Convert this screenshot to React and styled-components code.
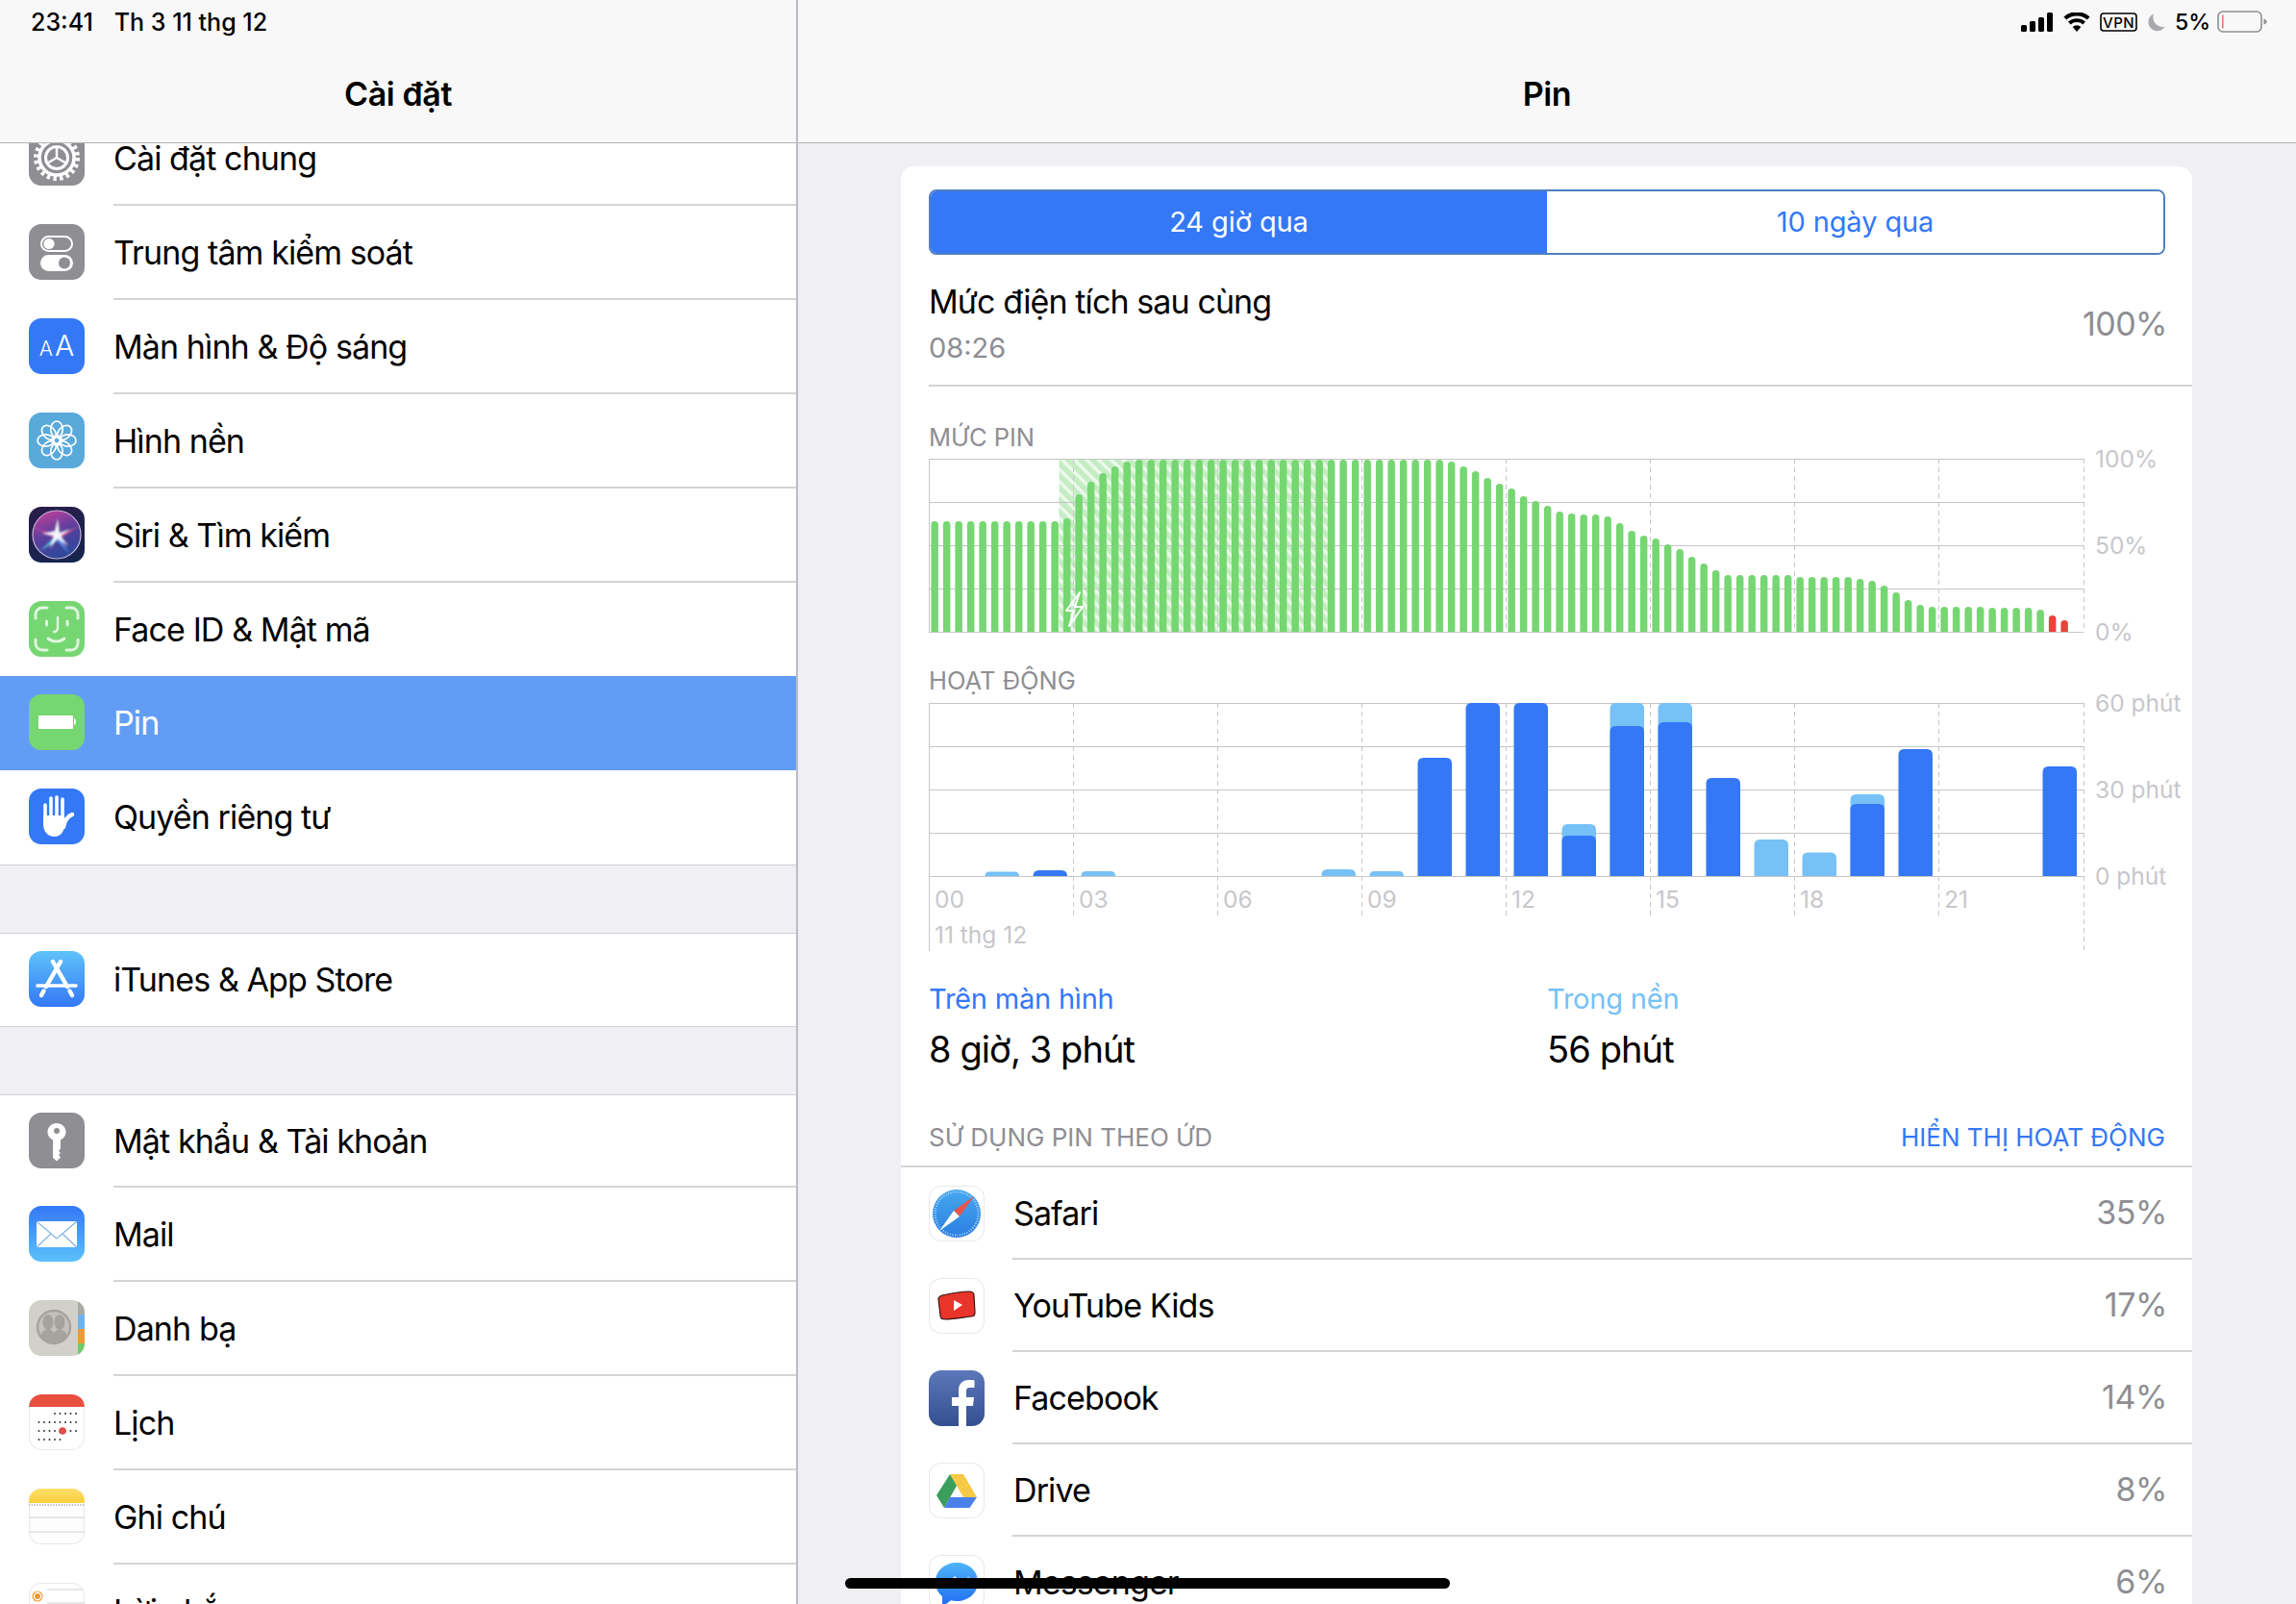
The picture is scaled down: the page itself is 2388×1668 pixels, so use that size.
import styled, { createGlobalStyle } from "styled-components";

const BLUE = "#3478f6";
const LIGHT_BLUE = "#76c1f6";
const GREEN = "#76d672";
const RED = "#e8443a";
const GREY = "#8e8e93";
const FAINT = "#c7c7cc";
const GRID = "#c6c6c8";

const GlobalStyle = createGlobalStyle`
    html, body {
        margin: 0;
        padding: 0;
        background: #efeff4;
    }
    body {
        font-family: Inter, "Liberation Sans", "Noto Sans", sans-serif;
        color: #000;
    }
`;

const Screen = styled.div`
    position: relative;
    display: flex;
    width: 2388px;
    height: 1668px;
    overflow: hidden;
`;

const Sidebar = styled.aside`
    width: 828px;
    flex: none;
    border-right: 2px solid #bcbcc6;
    display: flex;
    flex-direction: column;
    overflow: hidden;
`;

const Detail = styled.main`
    flex: 1;
    display: flex;
    flex-direction: column;
    overflow: hidden;
`;

const Header = styled.header`
    position: relative;
    z-index: 2;
    flex: none;
    height: 148px;
    background: #f8f8f9;
    border-bottom: 1px solid #b2b2b4;
`;

const StatusBar = styled.div`
    height: 46px;
    display: flex;
    align-items: center;
    gap: ${(p) => p.$gap || 0}px;
    justify-content: ${(p) => (p.$end ? "flex-end" : "flex-start")};
    padding: 0 ${(p) => (p.$end ? 30 : 0)}px 0 ${(p) => (p.$end ? 0 : 32)}px;
    font-size: 25px;
    font-weight: 500;
`;

const DateText = styled.span`
    margin-left: 22px;
`;

const Title = styled.h1`
    margin: 0;
    height: 102px;
    line-height: 104px;
    text-align: center;
    font-size: 34px;
    font-weight: 600;
    letter-spacing: -0.4px;
`;

const SettingsList = styled.div`
    margin-top: -33px;
`;

const Group = styled.section`
    background: #fff;
    border-bottom: 1px solid #d1d1d6;

    & + & {
        margin-top: 70px;
        border-top: 1px solid #d1d1d6;
    }
    & + & > :first-child {
        height: 96px;
    }
    & > :last-child > div {
        border-bottom-color: transparent;
    }
`;

const SettingRow = styled.div`
    height: ${(p) => (p.$short ? 97 : 98)}px;
    display: flex;
    align-items: center;
    padding-left: 30px;
    gap: 30px;
    background: ${(p) => (p.$selected ? "#629df5" : "transparent")};
    color: ${(p) => (p.$selected ? "#fff" : "#000")};

    & > :first-child {
        margin-bottom: 2px;
    }
`;

const RowBody = styled.div`
    flex: 1;
    align-self: stretch;
    display: flex;
    align-items: center;
    justify-content: space-between;
    box-sizing: border-box;
    padding-top: 1px;
    border-bottom: 2px solid ${(p) => (p.$plain ? "transparent" : "#d4d4d8")};
    font-size: 34px;
    letter-spacing: -0.9px;
`;

const Tile = styled.div`
    width: 58px;
    height: 58px;
    flex: none;
    border-radius: 13px;
    overflow: hidden;
    background: ${(p) => p.$bg || "#fff"};
    box-shadow: ${(p) => (p.$outline ? "inset 0 0 0 1px #e9e9ec" : "none")};

    svg {
        display: block;
    }
`;

const TileLetters = styled.div`
    height: 58px;
    display: flex;
    align-items: baseline;
    justify-content: center;
    gap: 2px;
    color: #fff;
    font-weight: 300;
    line-height: 56px;
`;

const SmallA = styled.span`
    font-size: 21px;
`;

const BigA = styled.span`
    font-size: 30px;
`;

const Card = styled.div`
    margin: 24px 0 0 107px;
    width: 1343px;
    flex: none;
    background: #fff;
    border-radius: 14px 14px 0 0;
    padding-top: 24px;
`;

const Segmented = styled.div`
    margin: 0 28px 0 29px;
    height: 68px;
    display: flex;
    box-sizing: border-box;
    border: 2px solid #4f7fc0;
    border-radius: 8px;
    overflow: hidden;
`;

const Segment = styled.div`
    flex: 1;
    display: flex;
    align-items: center;
    justify-content: center;
    padding-bottom: 2px;
    font-size: 29px;
    letter-spacing: -0.1px;
    background: ${(p) => (p.$active ? BLUE : "#fff")};
    color: ${(p) => (p.$active ? "#fff" : BLUE)};
`;

const Summary = styled.div`
    margin-left: 29px;
    padding: 7px 26px 0 0;
    height: 137px;
    box-sizing: border-box;
    display: flex;
    align-items: center;
    justify-content: space-between;
    border-bottom: 2px solid #d4d4d8;
`;

const SummaryTitle = styled.div`
    font-size: 34px;
    letter-spacing: -0.9px;
    margin-bottom: 10px;
`;

const SummaryTime = styled.div`
    font-size: 29px;
    color: ${GREY};
`;

const SummaryValue = styled.div`
    font-size: 34px;
    color: ${GREY};
    letter-spacing: -0.5px;
`;

const ChartBlock = styled.div`
    margin: ${(p) => p.$top}px 0 0 29px;
`;

const ChartLabel = styled.div`
    height: 32px;
    line-height: 32px;
    margin-bottom: ${(p) => p.$gap}px;
    font-size: 25.5px;
    color: ${GREY};
`;

const ChartSvg = styled.svg`
    display: block;
    overflow: visible;
`;

const AxisText = styled.text`
    font-size: 24.5px;
    fill: ${FAINT};
    dominant-baseline: central;
`;

const Legend = styled.div`
    margin: 32px 0 0 29px;
    display: grid;
    grid-template-columns: 643px 1fr;
`;

const LegendName = styled.div`
    height: 36px;
    line-height: 36px;
    font-size: 29px;
    letter-spacing: -0.2px;
    color: ${(p) => p.$color};
`;

const LegendValue = styled.div`
    margin-top: 12px;
    height: 44px;
    line-height: 44px;
    font-size: 38px;
    letter-spacing: -0.9px;
`;

const SectionHeader = styled.div`
    margin-top: 40px;
    height: 59px;
    padding: 0 28px 0 29px;
    display: flex;
    align-items: center;
    justify-content: space-between;
    border-bottom: 2px solid #d4d4d8;
    font-size: 26px;
    color: ${GREY};
`;

const SectionAction = styled.span`
    color: ${BLUE};
`;

const AppRow = styled.div`
    height: 96px;
    display: flex;
    align-items: center;
    padding-left: 29px;
    gap: 29px;
`;

const AppBody = styled(RowBody)`
    padding-right: 26px;
    padding-left: 1px;
`;

const Percent = styled.span`
    margin-bottom: 2px;
    color: ${GREY};
    letter-spacing: -0.4px;
`;

const HomeIndicator = styled.div`
    position: absolute;
    left: 879px;
    top: 1641px;
    width: 629px;
    height: 11px;
    border-radius: 6px;
    background: #000;
    z-index: 3;
`;

const Percentage = styled.span`
    margin-right: -3px;
    font-size: 23px;
    font-weight: 500;
`;

/* status bar glyphs */
const SignalIcon = () => (
    <svg width="34" height="20" viewBox="0 0 34 20">
        <rect x="0" y="13" width="6" height="7" rx="1.5" />
        <rect x="9" y="9" width="6" height="11" rx="1.5" />
        <rect x="18" y="5" width="6" height="15" rx="1.5" />
        <rect x="27" y="0" width="6" height="20" rx="1.5" />
    </svg>
);

const WifiIcon = () => (
    <svg width="28" height="20" viewBox="0 0 28 20">
        <path d="M14 20l-4.4-5a6.4 6.4 0 0 1 8.8 0z" />
        <path d="M7.6 12.4L5 9.6a13.6 13.6 0 0 1 18 0l-2.6 2.8a10 10 0 0 0-12.8 0z" />
        <path d="M3.2 7.4L.4 4.4a20.6 20.6 0 0 1 27.2 0l-2.8 3a16.6 16.6 0 0 0-21.6 0z" />
    </svg>
);

const VpnIcon = () => (
    <svg width="39" height="20" viewBox="0 0 39 20">
        <rect x="1" y="1" width="37" height="18" rx="3" fill="none" stroke="#000" strokeWidth="1.6" />
        <text x="19.5" y="15.500" textAnchor="middle" fontSize="15" fontWeight="500" letterSpacing="0.4">VPN</text>
    </svg>
);

const MoonIcon = () => (
    <svg width="19" height="19" viewBox="0 0 19 19">
        <path d="M7 .5a9.2 9.2 0 1 0 11.5 13.2A10 10 0 0 1 7 .5z" fill="#a9a9ae" />
    </svg>
);

const BatteryIcon = () => (
    <svg width="52" height="24" viewBox="0 0 52 24">
        <rect x="1" y="1" width="45" height="21" rx="5" fill="none" stroke="#8e8e93" strokeWidth="1.6" />
        <rect x="5" y="4.5" width="1.6" height="14" fill="#e8796f" />
        <path d="M48.5 8.5c2 .6 3 1.6 3 3s-1 2.4-3 3z" fill="#8e8e93" />
    </svg>
);

/* settings tiles */
const GearTile = () => (
    <Tile $bg="#8e8e93">
        <svg width="58" height="58" viewBox="0 0 58 58" fill="none" stroke="#fff">
            <circle cx="29" cy="29" r="21.500" strokeWidth="5" strokeDasharray="3.400 3.350" />
            <circle cx="29" cy="29" r="18" strokeWidth="3.500" />
            <circle cx="29" cy="29" r="11.500" strokeWidth="3" />
            <path d="M29 29V17M29 29l10.4 6M29 29l-10.4 6" strokeWidth="2.500" />
        </svg>
    </Tile>
);

const ControlTile = () => (
    <Tile $bg="#8e8e93">
        <svg width="58" height="58" viewBox="0 0 58 58">
            <rect x="13" y="13" width="32" height="15" rx="7.5" fill="none" stroke="#fff" strokeWidth="2" />
            <circle cx="21" cy="20.5" r="5.6" fill="#fff" />
            <rect x="12" y="32" width="34" height="17" rx="8.5" fill="#fff" />
            <circle cx="37" cy="40.5" r="6" fill="#8e8e93" />
        </svg>
    </Tile>
);

const DisplayTile = () => (
    <Tile $bg={BLUE}>
        <TileLetters>
            <SmallA>A</SmallA>
            <BigA>A</BigA>
        </TileLetters>
    </Tile>
);

const WallpaperTile = () => (
    <Tile $bg="#5aa9db">
        <svg width="58" height="58" viewBox="0 0 58 58" fill="none" stroke="#fff" strokeWidth="1.7">
            {[0, 45, 90, 135, 180, 225, 270, 315].map((a) => (
                <ellipse key={a} cx="29" cy="17.5" rx="6.2" ry="8.5" transform={`rotate(${a} 29 29)`} />
            ))}
            <circle cx="29" cy="29" r="5" />
        </svg>
    </Tile>
);

const SiriTile = () => (
    <Tile $bg="linear-gradient(160deg,#2a1c4a,#14264f)">
        <svg width="58" height="58" viewBox="0 0 58 58">
            <defs>
                <linearGradient id="siriFace" x1="0.2" y1="0" x2="0.6" y2="1">
                    <stop offset="0" stopColor="#c23f9a" />
                    <stop offset="0.5" stopColor="#5a3f9e" />
                    <stop offset="1" stopColor="#2a4a9a" />
                </linearGradient>
                <filter id="siriBlur">
                    <feGaussianBlur stdDeviation="1.300" />
                </filter>
            </defs>
            <circle cx="29" cy="29" r="25" fill="url(#siriFace)" stroke="#c9b3d9" strokeWidth="1.2" />
            <g filter="url(#siriBlur)">
                <path d="M29 31L52 20 32 33z" fill="#e85f8e" />
                <path d="M30 30L6 22 27 33z" fill="#d0479e" />
                <path d="M28 30L12 46 33 32z" fill="#4fd0e0" />
                <path d="M30 30L42 48 26 32z" fill="#5fa0f0" />
                <path d="M30 12l2 15 11-4-10 7 8 11-11-8-8 10 4-13-12-2 13-3z" fill="#f4f4fb" />
            </g>
        </svg>
    </Tile>
);

const FaceTile = () => (
    <Tile $bg={GREEN}>
        <svg width="58" height="58" viewBox="0 0 58 58" fill="none" stroke="#dff5de" strokeWidth="3" strokeLinecap="round">
            <path d="M7 18v-4a7 7 0 0 1 7-7h5M39 7h5a7 7 0 0 1 7 7v4M7 40v4a7 7 0 0 0 7 7h5M51 40v4a7 7 0 0 1-7 7h-5" />
            <path d="M18.500 21v4M40 21v4" />
            <path d="M30 17v11a4 4 0 0 1-4 4" strokeWidth="2.400" />
            <path d="M20 39c5 4 12 4 17 0" />
        </svg>
    </Tile>
);

const BatteryTile = () => (
    <Tile $bg={GREEN}>
        <svg width="58" height="58" viewBox="0 0 58 58" fill="#fff">
            <rect x="10" y="22" width="36" height="14" rx="1" />
            <path d="M47 25c1.4.4 2 1.6 2 3.5s-.6 3-2 3.5z" />
        </svg>
    </Tile>
);

const PrivacyTile = () => (
    <Tile $bg={BLUE}>
        <svg width="58" height="58" viewBox="0 0 58 58" fill="none" stroke="#fff" strokeLinecap="round">
            <path d="M17 17v16M23 10v20M29 9v21M35 11v19" strokeWidth="3.600" />
            <path d="M15 28h22v9c0 8-4 13-10.500 13S15 45 15 37z" fill="#fff" stroke="none" />
            <path d="M36 40c1-6 4-11 9-13" strokeWidth="4.500" />
        </svg>
    </Tile>
);

const StoreTile = () => (
    <Tile $bg="linear-gradient(#5fc2f9,#3478f6)">
        <svg width="58" height="58" viewBox="0 0 58 58" fill="none" stroke="#fff" strokeLinecap="round">
            <path d="M25 11l15 26M33 11L18 37" strokeWidth="4.400" />
            <path d="M9 36h40" strokeWidth="3.600" />
            <path d="M15.500 41.500L13 46M42.500 41.500L45 46" strokeWidth="4.400" />
        </svg>
    </Tile>
);

const KeyTile = () => (
    <Tile $bg="#8e8e93">
        <svg width="58" height="58" viewBox="0 0 58 58">
            <path fillRule="evenodd" fill="#fff" d="M29 11c-5.4 0-9.5 4-9.5 9 0 3.8 2.300 7 5.500 8.300V47l4 3.500 4-4-2-2.500 2-2-2-2 2-2.500v-9.200c3.200-1.300 5.500-4.500 5.500-8.300 0-5-4.100-9-9.500-9zm0 5a3 3 0 1 1 0 6 3 3 0 0 1 0-6z" />
        </svg>
    </Tile>
);

const MailTile = () => (
    <Tile $bg="linear-gradient(#3478f6,#5cc1fb)">
        <svg width="58" height="58" viewBox="0 0 58 58">
            <rect x="8" y="16" width="42" height="27" fill="#fff" />
            <path d="M8 16l21 18 21-18M8 43l15-14M50 43L35 29" fill="none" stroke="#7fb3e6" strokeWidth="1.2" />
        </svg>
    </Tile>
);

const ContactsTile = () => (
    <Tile $bg="#d2d0ca">
        <svg width="58" height="58" viewBox="0 0 58 58">
            <rect x="51" y="0" width="7" height="15" fill="#a9a9a5" />
            <rect x="51" y="15" width="7" height="15" fill="#6bb3ee" />
            <rect x="51" y="30" width="7" height="15" fill="#ee9b37" />
            <rect x="51" y="45" width="7" height="13" fill="#6fcb69" />
            <circle cx="26" cy="28" r="17" fill="#c4c2bd" stroke="#a5a39e" strokeWidth="2.400" />
            <ellipse cx="20" cy="23" rx="5.500" ry="8" fill="#a5a39e" />
            <ellipse cx="32" cy="23" rx="5.500" ry="8" fill="#a5a39e" />
            <path d="M12 38c1-5 4-7 8-8 4 1 5 2 6 4 1-2 3-3 6-4 4 1 7 3 8 8-3 4-8 6-14 6s-11-2-14-6z" fill="#a5a39e" />
        </svg>
    </Tile>
);

const calendarRows = [
    { y: 20, from: 3, to: 7 },
    { y: 29, from: 0, to: 7 },
    { y: 38, from: 0, to: 7 },
    { y: 47, from: 0, to: 4 },
];

const CalendarTile = () => (
    <Tile $outline>
        <svg width="58" height="58" viewBox="0 0 58 58">
            <path d="M0 13V13a13 13 0 0 1 13-13h32a13 13 0 0 1 13 13z" fill="#e94f3f" />
            {calendarRows.map((row) =>
                Array.from({ length: row.to - row.from + 1 }, (_, i) => (
                    <circle key={`${row.y}-${i}`} cx={10.500 + (row.from + i) * 5.500} cy={row.y} r="0.9" fill="#222" />
                ))
            )}
            <circle cx="35" cy="38" r="3.800" fill="#e0504a" />
        </svg>
    </Tile>
);

const NotesTile = () => (
    <Tile $bg="#fdfdfd" $outline>
        <svg width="58" height="58" viewBox="0 0 58 58">
            <defs>
                <linearGradient id="notesTop" x1="0" y1="0" x2="0" y2="1">
                    <stop offset="0" stopColor="#fddf6b" />
                    <stop offset="1" stopColor="#fbcf3d" />
                </linearGradient>
            </defs>
            <rect x="0" y="0" width="58" height="15" fill="url(#notesTop)" />
            <path d="M0 17H58" stroke="#b9b9b0" strokeWidth="2" strokeDasharray="1.200 1.600" />
            <path d="M0 30H58M0 45H58" stroke="#cfcfd2" strokeWidth="1" />
        </svg>
    </Tile>
);

const RemindersTile = () => (
    <Tile $outline>
        <svg width="58" height="58" viewBox="0 0 58 58">
            <circle cx="9" cy="14" r="5" fill="none" stroke="#ee9b37" strokeWidth="1.200" />
            <circle cx="9" cy="14" r="3" fill="#ee9b37" />
            <path d="M19 7H58M19 21H58M19 35H58" stroke="#cfcfd2" strokeWidth="1" />
        </svg>
    </Tile>
);

/* app tiles */
const SafariTile = () => (
    <Tile $outline>
        <svg width="58" height="58" viewBox="0 0 58 58">
            <defs>
                <linearGradient id="safariFace" x1="0" y1="0" x2="0" y2="1">
                    <stop offset="0" stopColor="#46a8ee" />
                    <stop offset="1" stopColor="#2b7ee2" />
                </linearGradient>
            </defs>
            <circle cx="29" cy="29" r="25" fill="url(#safariFace)" />
            <circle cx="29" cy="29" r="22.500" fill="none" stroke="#cfe6fa" strokeWidth="2" strokeDasharray="0.8 1.800" />
            <path d="M47 11L32 32 26 26z" fill="#e8544a" />
            <path d="M11 47L26 26 32 32z" fill="#fff" />
        </svg>
    </Tile>
);

const YoutubeTile = () => (
    <Tile $outline>
        <svg width="58" height="58" viewBox="0 0 58 58">
            <path d="M14 18c9-2 20-4 28-4 3 0 5 1 5 4l1 18c0 3-2 4-4 4-8 1-19 3-27 3-3 0-5-1-5-4l-2-17c0-2 1-3 4-4z" fill="#e8342a" stroke="#3a1512" strokeWidth="1.200" />
            <path d="M26 23l9 5-9 6z" fill="#fff" />
        </svg>
    </Tile>
);

const FacebookTile = () => (
    <Tile $bg="linear-gradient(#5d78ba,#344f92)">
        <svg width="58" height="58" viewBox="0 0 58 58">
            <path d="M31 58V37h-7v-9h7v-7c0-7 4-11 10.500-11 3 0 5 .2 6 .4V18h-4.500c-3.300 0-4 1.600-4 4v6h8l-1 9h-7v21z" fill="#fff" />
        </svg>
    </Tile>
);

const DriveTile = () => (
    <Tile $outline>
        <svg width="58" height="58" viewBox="0 0 58 58">
            <path d="M22 12h14l14 24H36z" fill="#f7ca45" />
            <path d="M22 12l7 12-13 23-8-13z" fill="#3a9e5c" />
            <path d="M22 36h28l-7.500 11H16z" fill="#4a80ea" />
        </svg>
    </Tile>
);

const MessengerTile = () => (
    <Tile $outline>
        <svg width="58" height="58" viewBox="0 0 58 58">
            <defs>
                <linearGradient id="messengerFace" x1="0" y1="0" x2="0" y2="1">
                    <stop offset="0" stopColor="#4eb4fa" />
                    <stop offset="1" stopColor="#1f6cf0" />
                </linearGradient>
            </defs>
            <path d="M29 8c12 0 22 8 22 20S41 48 29 48c-2 0-4-.3-6-.8L14 54v-11C9 39 7 34 7 28 7 16 17 8 29 8z" fill="url(#messengerFace)" />
            <path d="M15 35l12-13 6 6 10-6-12 13-6-6z" fill="#fff" />
        </svg>
    </Tile>
);

const settingGroups = [
    [
        { label: "Cài đặt chung", tile: <GearTile /> },
        { label: "Trung tâm kiểm soát", tile: <ControlTile /> },
        { label: "Màn hình & Độ sáng", tile: <DisplayTile /> },
        { label: "Hình nền", tile: <WallpaperTile /> },
        { label: "Siri & Tìm kiếm", tile: <SiriTile /> },
        { label: "Face ID & Mật mã", tile: <FaceTile />, plain: true },
        { label: "Pin", tile: <BatteryTile />, selected: true },
        { label: "Quyền riêng tư", tile: <PrivacyTile /> },
    ],
    [{ label: "iTunes & App Store", tile: <StoreTile /> }],
    [
        { label: "Mật khẩu & Tài khoản", tile: <KeyTile /> },
        { label: "Mail", tile: <MailTile /> },
        { label: "Danh bạ", tile: <ContactsTile /> },
        { label: "Lịch", tile: <CalendarTile /> },
        { label: "Ghi chú", tile: <NotesTile /> },
        { label: "Lời nhắc", tile: <RemindersTile /> },
    ],
];

const appUsage = [
    { name: "Safari", value: "35%", tile: <SafariTile /> },
    { name: "YouTube Kids", value: "17%", tile: <YoutubeTile /> },
    { name: "Facebook", value: "14%", tile: <FacebookTile /> },
    { name: "Drive", value: "8%", tile: <DriveTile /> },
    { name: "Messenger", value: "6%", tile: <MessengerTile /> },
];

// battery level per 15 minutes, in chart pixels (180 = full)
const batteryLevels = [
    115, 115, 115, 115, 115, 115, 115, 115, 115, 115, 115, 118, 143, 156, 165, 172, 177,
    179, 179, 179, 179, 179, 179, 179, 179, 179, 179, 179, 179, 179, 179, 179, 179, 179,
    179, 179, 179, 179, 179, 179, 179, 179, 179, 177, 172, 167, 160, 154, 149, 141, 136,
    131, 125, 123, 122, 122, 120, 113, 105, 100, 97, 91, 86, 78, 71, 64, 59, 59, 59, 59,
    59, 59, 57, 57, 57, 57, 57, 55, 53, 48, 41, 33, 28, 26, 26, 26, 26, 26, 25, 25, 25,
    25, 23, 17, 12,
];

// screen / background minutes per hour, in chart pixels
const activity = {
    1: { bg: 4.500 },
    2: { fg: 6 },
    3: { bg: 5 },
    8: { bg: 7 },
    9: { bg: 5 },
    10: { fg: 123 },
    11: { fg: 180 },
    12: { fg: 180 },
    13: { bg: 54, fg: 42 },
    14: { bg: 180, fg: 156 },
    15: { bg: 180, fg: 160 },
    16: { fg: 102 },
    17: { bg: 38 },
    18: { bg: 24.500 },
    19: { bg: 85, fg: 75 },
    20: { fg: 132 },
    23: { fg: 114 },
};

const HOUR_LINES = [150, 300, 450, 600, 750, 900, 1050];
const HOUR_LABELS = ["00", "03", "06", "09", "12", "15", "18", "21"];

const barPath = (x, h, w, r, base = 180) => {
    const radius = Math.min(r, h);
    const top = base - h;
    return `M${x} ${base}V${top + radius}Q${x} ${top} ${x + radius} ${top}H${x + w - radius}Q${x + w} ${top} ${x + w} ${top + radius}V${base}z`;
};

const GridLines = () => (
    <g stroke={GRID} strokeWidth="1">
        {[0.5, 45.5, 90.5, 135.5, 180.5].map((y) => (
            <line key={y} x1="0" x2="1201" y1={y} y2={y} />
        ))}
    </g>
);

const BatteryChart = () => (
    <ChartSvg width="1290" height="181" viewBox="0 0 1290 181">
        <defs>
            <pattern id="chargeHatch" width="9" height="9" patternUnits="userSpaceOnUse" patternTransform="rotate(-45)">
                <rect width="9" height="9" fill="#ecf9eb" />
                <rect width="5.500" height="9" fill="#c5ecc3" />
            </pattern>
        </defs>
        <rect x="135.500" y="0" width="280" height="180" fill="url(#chargeHatch)" />
        <GridLines />
        {HOUR_LINES.map((x) => (
            <line key={x} x1={x + 0.5} x2={x + 0.5} y1="0" y2="180" stroke={FAINT} strokeDasharray="5 4" />
        ))}
        <line x1="0.5" x2="0.5" y1="0" y2="180" stroke={GRID} />
        <line x1="1201.5" x2="1201.5" y1="0" y2="180" stroke={FAINT} strokeDasharray="5 4" />
        {batteryLevels.map((h, i) => (
            <path key={i} d={barPath(2.400 + i * 12.500, h, 7.500, 3.700)} fill={i > 92 ? RED : GREEN} />
        ))}
        <path d="M157 139l-14 19h8l-5 16 14-20h-8l5-15z" fill="none" stroke="#fff" strokeWidth="2" strokeLinejoin="round" />
        <AxisText x="1213" y="0">100%</AxisText>
        <AxisText x="1213" y="90">50%</AxisText>
        <AxisText x="1213" y="180">0%</AxisText>
    </ChartSvg>
);

const ActivityChart = () => (
    <ChartSvg width="1290" height="258" viewBox="0 0 1290 258">
        <GridLines />
        {HOUR_LINES.map((x) => (
            <line key={x} x1={x + 0.5} x2={x + 0.5} y1="0" y2="225" stroke={FAINT} strokeDasharray="5 4" />
        ))}
        <line x1="0.5" x2="0.5" y1="0" y2="258" stroke={GRID} />
        <line x1="1201.5" x2="1201.5" y1="0" y2="258" stroke={FAINT} strokeDasharray="5 4" />
        {Object.entries(activity).map(([hour, { bg, fg }]) => {
            const x = hour * 50 + 8.500;
            return (
                <g key={hour}>
                    {bg && <path d={barPath(x, bg, 35.500, 6)} fill={LIGHT_BLUE} />}
                    {fg && <path d={barPath(x, fg, 35.500, 6)} fill={BLUE} />}
                </g>
            );
        })}
        {HOUR_LABELS.map((label, i) => (
            <AxisText key={label} x={i * 150 + 6} y="204">{label}</AxisText>
        ))}
        <AxisText x="6" y="241">11 thg 12</AxisText>
        <AxisText x="1213" y="0">60 phút</AxisText>
        <AxisText x="1213" y="90">30 phút</AxisText>
        <AxisText x="1213" y="180">0 phút</AxisText>
    </ChartSvg>
);

function App() {
    return (
        <Screen>
            <GlobalStyle />
            <Sidebar>
                <Header>
                    <StatusBar>
                        <span>23:41</span>
                        <DateText>Th 3 11 thg 12</DateText>
                    </StatusBar>
                    <Title>Cài đặt</Title>
                </Header>
                <SettingsList>
                    {settingGroups.map((group, g) => (
                        <Group key={g}>
                            {group.map((item) => (
                                <SettingRow key={item.label} $selected={item.selected} $short={item.plain}>
                                    {item.tile}
                                    <RowBody $plain={item.plain || item.selected}>{item.label}</RowBody>
                                </SettingRow>
                            ))}
                        </Group>
                    ))}
                </SettingsList>
            </Sidebar>
            <Detail>
                <Header>
                    <StatusBar $end $gap={10}>
                        <SignalIcon />
                        <WifiIcon />
                        <VpnIcon />
                        <MoonIcon />
                        <Percentage>5%</Percentage>
                        <BatteryIcon />
                    </StatusBar>
                    <Title>Pin</Title>
                </Header>
                <Card>
                    <Segmented>
                        <Segment $active>24 giờ qua</Segment>
                        <Segment>10 ngày qua</Segment>
                    </Segmented>
                    <Summary>
                        <div>
                            <SummaryTitle>Mức điện tích sau cùng</SummaryTitle>
                            <SummaryTime>08:26</SummaryTime>
                        </div>
                        <SummaryValue>100%</SummaryValue>
                    </Summary>
                    <ChartBlock $top={37}>
                        <ChartLabel $gap={6}>MỨC PIN</ChartLabel>
                        <BatteryChart />
                    </ChartBlock>
                    <ChartBlock $top={34}>
                        <ChartLabel $gap={7}>HOẠT ĐỘNG</ChartLabel>
                        <ActivityChart />
                    </ChartBlock>
                    <Legend>
                        <div>
                            <LegendName $color={BLUE}>Trên màn hình</LegendName>
                            <LegendValue>8 giờ, 3 phút</LegendValue>
                        </div>
                        <div>
                            <LegendName $color={LIGHT_BLUE}>Trong nền</LegendName>
                            <LegendValue>56 phút</LegendValue>
                        </div>
                    </Legend>
                    <SectionHeader>
                        <span>SỬ DỤNG PIN THEO ỨD</span>
                        <SectionAction>HIỂN THỊ HOẠT ĐỘNG</SectionAction>
                    </SectionHeader>
                    {appUsage.map((app) => (
                        <AppRow key={app.name}>
                            {app.tile}
                            <AppBody>
                                <span>{app.name}</span>
                                <Percent>{app.value}</Percent>
                            </AppBody>
                        </AppRow>
                    ))}
                </Card>
            </Detail>
            <HomeIndicator />
        </Screen>
    );
}

export default App;
